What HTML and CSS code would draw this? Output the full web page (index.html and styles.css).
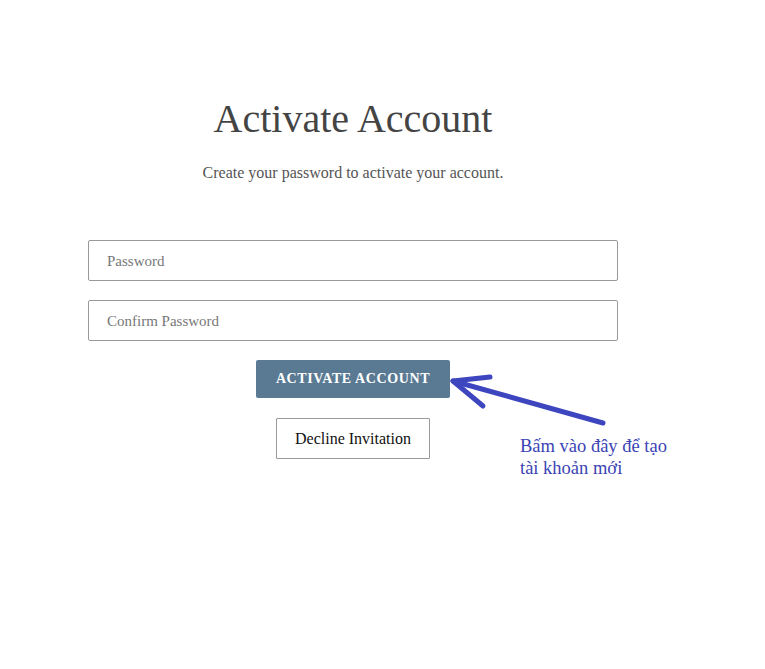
FILE: index.html
```html
<!DOCTYPE html>
<html lang="vi">
<head>
  <meta charset="UTF-8" />
  <meta name="viewport" content="width=device-width, initial-scale=1" />
  <title>Activate Account</title>
  <link rel="stylesheet" href="styles.css">
</head>
<body>
  <div class="page">
    <form class="activate-form" onsubmit="return false">
      <h1>Activate Account</h1>
      <p class="lead">Create your password to activate your account.</p>

      <input class="field" type="password" placeholder="Password" />
      <input class="field" type="password" placeholder="Confirm Password" />

      <button class="btn-primary" type="submit">Activate Account</button>
      <button class="btn-outline" type="button">Decline Invitation</button>
    </form>

    <!-- hand-drawn note pointing at the button -->
    <svg class="note-arrow" width="180" height="70" viewBox="440 365 180 70">
      <g fill="none" stroke="#3d46bf" stroke-width="5" stroke-linecap="round" stroke-linejoin="round">
        <path d="M603 423 L453 381" />
        <path d="M490 377 L453 381 L483 406" />
      </g>
    </svg>
    <div class="note-text">Bấm vào đây để tạo<br>tài khoản mới</div>
  </div>
</body>
</html>
```

FILE: styles.css
```css
body {
  margin: 0;
  background: #fff;
  font-family: 'Liberation Serif', 'Times New Roman', serif;
}

.page {
  position: relative;
  min-height: 669px;
}

.activate-form {
  width: 530px;
  margin-left: 88px;
  padding-top: 95px;
  display: flex;
  flex-direction: column;
  align-items: center;
}

h1 {
  margin: 0;
  font-size: 40px;
  font-weight: normal;
  line-height: 48px;
  color: #444;
}

.lead {
  margin: 21px 0 58px;
  font-size: 16px;
  line-height: 18px;
  color: #555;
}

.field {
  box-sizing: border-box;
  width: 100%;
  height: 41px;
  margin: 0 0 19px;
  padding: 1px 18px 0;
  border: 1px solid #999;
  border-radius: 2px;
  font-family: inherit;
  font-size: 15px;
  color: #333;
}

.field::placeholder {
  color: #777;
}

.btn-primary {
  box-sizing: border-box;
  width: 194px;
  height: 38px;
  border: none;
  border-radius: 2px;
  background: #5a7a94;
  color: #fff;
  font-family: inherit;
  font-size: 14px;
  font-weight: 600;
  letter-spacing: 0.6px;
  text-transform: uppercase;
  cursor: pointer;
}

.btn-outline {
  box-sizing: border-box;
  margin-top: 20px;
  width: 154px;
  height: 41px;
  border: 1px solid #999;
  border-radius: 1px;
  background: #fff;
  color: #111;
  font-family: inherit;
  font-size: 16px;
  cursor: pointer;
}

.note-arrow {
  position: absolute;
  left: 440px;
  top: 365px;
}

.note-text {
  position: absolute;
  left: 520px;
  top: 435px;
  font-size: 18.5px;
  line-height: 22px;
  color: #3b44b4;
}
```
